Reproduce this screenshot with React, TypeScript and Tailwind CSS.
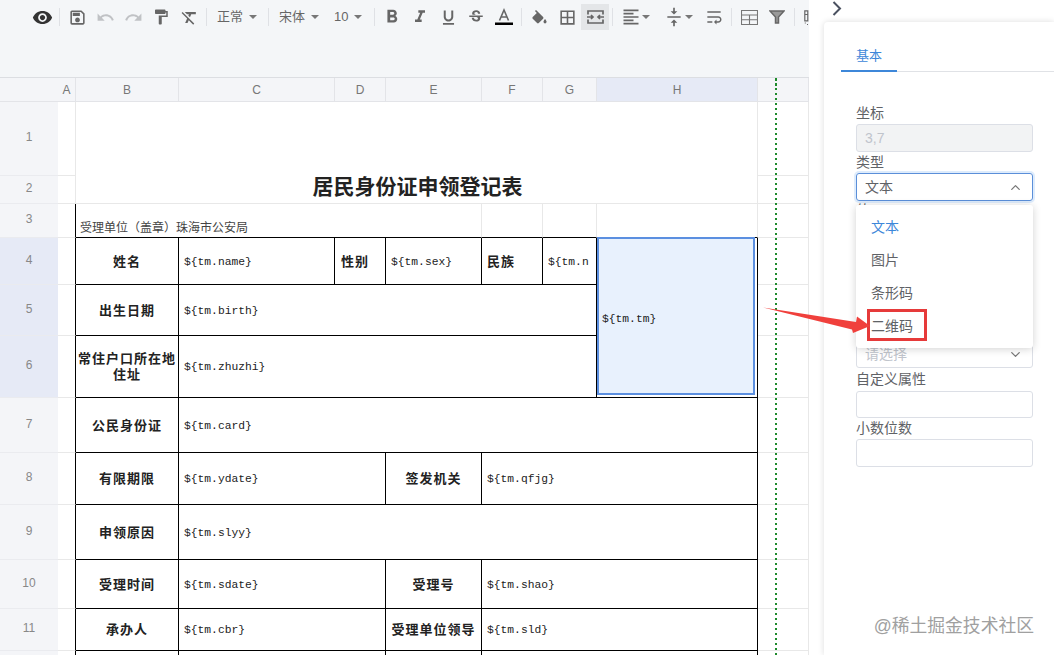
import React from "react";
import { ChevronUp, ChevronDown } from "lucide-react";
import {
  MdVisibility, MdOutlineSave, MdUndo, MdRedo, MdFormatPaint, MdFormatClear, MdFormatBold, MdFormatItalic,
  MdFormatUnderlined, MdStrikethroughS, MdBorderAll, MdFormatAlignLeft, MdVerticalAlignCenter, MdWrapText,
} from "react-icons/md";

const Sep = () => <div className="mx-[3px] h-[18px] w-px shrink-0 bg-[#dfe1e5]" />;
const Caret = () => <span className="h-0 w-0 border-x-[4px] border-t-[4px] border-x-transparent border-t-[#777]" />;
const Btn = ({ children, active }: { children: React.ReactNode; active?: boolean }) => (
  <div className={`flex h-[26px] w-[28px] shrink-0 items-center justify-center ${active ? "bg-[#e4e6e8]" : ""}`}>{children}</div>
);
const Sel = ({ label, w }: { label: string; w: string }) => (
  <div className={`flex h-[26px] shrink-0 items-center gap-[6px] pl-[7px] text-[13px] text-[#666] ${w}`}>
    <span>{label}</span>
    <Caret />
  </div>
);

const Merge = () => (
  <svg width="17" height="14" viewBox="0 0 17 14" fill="none" stroke="#666" strokeWidth="1.7">
    <path d="M1 4.5V1h15v3.5M1 9.500v3.500h15V9.500M0 7h6M4 5l2 2-2 2M17 7h-6M13 5l-2 2 2 2" />
  </svg>
);
const Bucket = () => (
  <svg width="19" height="19" viewBox="0 0 24 19" fill="#666">
    <path d="M16.56 8.94L7.62 0 6.21 1.410l2.380 2.380-5.150 5.150c-.59.59-.59 1.540 0 2.120l5.500 5.500c.29.29.68.44 1.060.44s.77-.15 1.060-.44l5.500-5.500c.59-.58.59-1.530 0-2.120zM19 11.500s-2 2.170-2 3.500c0 1.100.9 2 2 2s2-.9 2-2c0-1.330-2-3.500-2-3.500z" />
  </svg>
);
const ColorA = () => (
  <svg width="20" height="20" viewBox="0 0 20 20">
    <path d="M5.500 13.500 10 3l4.500 10.500M7 10h6" fill="none" stroke="#666" strokeWidth="1.600" />
    <rect x="1" y="15.500" width="18" height="2.500" fill="#000" />
  </svg>
);
const TableIcon = () => (
  <svg width="17" height="15" viewBox="0 0 17 15" fill="none" stroke="#777" strokeWidth="1.100">
    <path d="M.5.5h16v14H.5zM.5 5h16M.5 9.700h16M8.500 5v9.500" />
  </svg>
);
const Funnel = () => (
  <svg width="16" height="14" viewBox="0 0 16 14" fill="#999" stroke="#666" strokeWidth="1.500">
    <path d="M1 1h14L9.500 7v6h-3V7z" />
  </svg>
);
const Clipped = () => (
  <svg width="5" height="15" viewBox="0 0 5 15" fill="none" stroke="#666" strokeWidth="1.200">
    <path d="M.8.8h3v10h-3zM.8 4.500h3M.8 13h1M3 14.500h1" />
  </svg>
);

const Toolbar = () => (
  <div className="flex h-[78px] items-start overflow-hidden border-b border-[#dcdee2] bg-[#f4f6f8] pl-[28px] pt-[4px]">
    <div className="flex h-[26px] items-center">
      <Btn><MdVisibility size={21} color="#333" /></Btn>
      <Sep />
      <Btn><MdOutlineSave size={19} color="#666" /></Btn>
      <Btn><MdUndo size={19} color="#c0c2c5" /></Btn>
      <Btn><MdRedo size={19} color="#c0c2c5" /></Btn>
      <Btn><MdFormatPaint size={18} color="#666" /></Btn>
      <Btn><MdFormatClear size={19} color="#666" /></Btn>
      <Sep />
      <Sel label="正常" w="w-[55px]" />
      <Sep />
      <Sel label="宋体" w="w-[55px]" />
      <Sel label="10" w="w-[44px]" />
      <Sep />
      <Btn><MdFormatBold size={22} color="#666" /></Btn>
      <Btn><MdFormatItalic size={20} color="#666" /></Btn>
      <Btn><MdFormatUnderlined size={19} color="#666" /></Btn>
      <Btn><MdStrikethroughS size={18} color="#666" /></Btn>
      <Btn><ColorA /></Btn>
      <Sep />
      <Btn><Bucket /></Btn>
      <Btn><MdBorderAll size={19} color="#666" /></Btn>
      <Btn active><Merge /></Btn>
      <Sep />
      <div className="flex h-[26px] w-[43px] shrink-0 items-center gap-[1px] pl-[5px]"><MdFormatAlignLeft size={20} color="#666" /><Caret /></div>
      <div className="flex h-[26px] w-[41px] shrink-0 items-center gap-[1px] pl-[5px]"><MdVerticalAlignCenter size={20} color="#666" /><Caret /></div>
      <Btn><MdWrapText size={20} color="#666" /></Btn>
      <Sep />
      <Btn><TableIcon /></Btn>
      <Btn><Funnel /></Btn>
      <Sep />
      <div className="ml-[6px] shrink-0"><Clipped /></div>
    </div>
  </div>
);

const ColH = ({ t, sel }: { t: string; sel?: boolean }) => (
  <div className={`flex items-center justify-center border-r border-b border-[#e3e4e8] text-[12px] text-[#777] ${sel ? "bg-[#e6eaf6]" : "bg-[#f4f5f8]"}`}>{t}</div>
);
const RowH = ({ t, sel }: { t: string; sel?: boolean }) => (
  <div className={`flex items-center justify-center border-b border-[#eaebef] pb-[3px] text-[12px] text-[#888] ${sel ? "bg-[#e6eaf6]" : "bg-[#f4f5f8]"}`}>{t}</div>
);
const Light = ({ dark }: { dark?: boolean }) => (
  <div className={`border-b border-r border-b-[#e8e8e8] ${dark ? "border-r-black" : "border-r-[#e8e8e8]"}`} />
);
const Head = ({ t, span = "", left }: { t?: string; span?: string; left?: string }) => (
  <div className={`flex items-center border-r border-b border-black px-[2px] pt-[1px] text-center text-[13px] leading-[16px] font-bold tracking-[1px] text-[#222] ${left ?? "justify-center"} ${span}`}>
    <span>{t}</span>
  </div>
);
const Val = ({ t, span = "" }: { t?: string; span?: string }) => (
  <div className={`flex items-center overflow-hidden border-r border-b border-black pl-[5px] pt-[2px] font-['Liberation_Mono',monospace] text-[11.3px] whitespace-nowrap text-[#222] ${span}`}>{t}</div>
);
const RightCell = () => <div className="border-r border-b border-[#e8e8e8]" />;

const Sheet = () => (
  <div className="relative h-[577px] overflow-hidden bg-white">
    <div className="grid grid-cols-[58px_18px_103px_156px_51px_96px_61px_54px_161px_51px] grid-rows-[24px_74px_28px_34px_47px_51px_62px_55px_52px_55px_49px_42px_40px]">
      <div className="border-b border-[#e3e4e8] bg-[#f4f5f8]" />
      <ColH t="A" /><ColH t="B" /><ColH t="C" /><ColH t="D" /><ColH t="E" /><ColH t="F" /><ColH t="G" />
      <ColH t="H" sel /><ColH t="" />

      <RowH t="1" /><Light />
      <div className="col-span-7 row-span-2 flex items-end justify-center border-r border-b border-[#e8e8e8] pb-[1px] pl-[2px] text-[21px] leading-[30px] font-bold text-[#222]">
        居民身份证申领登记表
      </div>
      <RightCell />

      <RowH t="2" /><Light /><RightCell />

      <RowH t="3" /><Light dark />
      <div className="col-span-4 flex items-end border-b border-r border-b-black border-r-[#e8e8e8] pl-[4px] text-[12px] leading-[18px] text-[#444]">
        受理单位（盖章）珠海市公安局
      </div>
      <div className="border-b border-r border-b-black border-r-[#e8e8e8]" />
      <div className="border-b border-r border-b-black border-r-[#e8e8e8]" />
      <div className="border-b border-r border-b-black border-r-[#e8e8e8]" />
      <RightCell />

      <RowH t="4" sel /><Light dark />
      <Head t="姓名" /><Val t={"${tm.name}"} />
      <Head t="性别" left="justify-start pl-[6px]" /><Val t={"${tm.sex}"} />
      <Head t="民族" left="justify-start pl-[5px]" /><Val t={"${tm.n"} />
      <div className="row-span-3 border-r border-b border-black">
        <div className="-mt-px flex h-[158px] w-[158px] items-center border-2 border-[#5b8fe0] bg-[#e8f1fd] pl-[3px] pt-[6px] font-['Liberation_Mono',monospace] text-[11.3px] text-[#222]">
          {"${tm.tm}"}
        </div>
      </div>
      <RightCell />

      <RowH t="5" sel /><Light dark />
      <Head t="出生日期" /><Val t={"${tm.birth}"} span="col-span-5" />
      <RightCell />

      <RowH t="6" sel /><Light dark />
      <Head t="常住户口所在地住址" /><Val t={"${tm.zhuzhi}"} span="col-span-5" />
      <RightCell />

      <RowH t="7" /><Light dark />
      <Head t="公民身份证" /><Val t={"${tm.card}"} span="col-span-6" />
      <RightCell />

      <RowH t="8" /><Light dark />
      <Head t="有限期限" /><Val t={"${tm.ydate}"} span="col-span-2" />
      <Head t="签发机关" /><Val t={"${tm.qfjg}"} span="col-span-3" />
      <RightCell />

      <RowH t="9" /><Light dark />
      <Head t="申领原因" /><Val t={"${tm.slyy}"} span="col-span-6" />
      <RightCell />

      <RowH t="10" /><Light dark />
      <Head t="受理时间" /><Val t={"${tm.sdate}"} span="col-span-2" />
      <Head t="受理号" /><Val t={"${tm.shao}"} span="col-span-3" />
      <RightCell />

      <RowH t="11" /><Light dark />
      <Head t="承办人" /><Val t={"${tm.cbr}"} span="col-span-2" />
      <Head t="受理单位领导" /><Val t={"${tm.sld}"} span="col-span-3" />
      <RightCell />

      <RowH t="" /><Light dark />
      <Head /><Val span="col-span-2" /><Head /><Val span="col-span-3" />
      <RightCell />
    </div>
    <div className="absolute top-0 bottom-0 left-[775px] w-[2px] bg-[repeating-linear-gradient(to_bottom,#1d8a2b_0,#1d8a2b_2.5px,transparent_2.5px,transparent_5px)]" />
  </div>
);

const Label = ({ t, cls = "" }: { t: string; cls?: string }) => (
  <div className={`flex items-center pb-[2px] text-[14px] leading-[18px] text-[#606266] ${cls}`}>{t}</div>
);
const Input = ({ cls = "" }: { cls?: string }) => (
  <div className={`rounded-[3px] border border-[#dcdfe6] bg-white ${cls}`} />
);

const Panel = () => (
  <div className="relative flex h-[655px] w-[245px] shrink-0 flex-col bg-white pl-[15px]">
    <div className="flex h-[22px] shrink-0 items-start pl-[8px] pt-[1px]">
      <svg width="10" height="15" viewBox="0 0 10 15" fill="none" stroke="#4a5160" strokeWidth="2">
        <path d="M1.500 1l6.500 6.500-6.500 6.500" />
      </svg>
    </div>
    <div className="flex-1 rounded-tl-[4px] shadow-[0_0_6px_rgba(0,0,0,0.14)]">
      <div className="ml-[17px] h-[50px] border-b border-[#e0e2e6]">
        <div className="flex h-[50px] w-[56px] items-center justify-center border-b-2 border-[#3d87d9] pt-[20px] text-[13px] text-[#3d87d9]">基本</div>
      </div>
      <div className="relative ml-[32px] mt-[32px] w-[177px]">
        <Label t="坐标" cls="h-[20px]" />
        <div className="flex h-[28px] items-center rounded-[3px] border border-[#dcdfe6] bg-[#f2f3f4] pl-[8px] text-[14px] text-[#c0c4cc]">3,7</div>
        <Label t="类型" cls="h-[21px]" />
        <div className="flex h-[28px] items-center justify-between rounded-[3px] border border-[#5b8fd9] pl-[8px] pr-[9px] text-[14px] text-[#606266] shadow-[0_0_0_2px_rgba(90,160,240,0.2)]">
          <span>文本</span>
          <ChevronUp size={15} color="#777" />
        </div>
        <Label t="值" cls="h-[20px]" />
        <div className="mt-[120px] flex h-[27px] items-center justify-between rounded-[3px] border border-[#dcdfe6] pl-[8px] pr-[9px] text-[14px] text-[#c0c4cc]">
          <span>请选择</span>
          <ChevronDown size={15} color="#777" />
        </div>
        <Label t="自定义属性" cls="h-[23px]" />
        <Input cls="h-[27px]" />
        <Label t="小数位数" cls="h-[21px]" />
        <Input cls="h-[28px]" />

        <div className="absolute left-0 top-[101px] z-10 h-[143px] w-[177px] rounded-[3px] bg-white py-[6px] text-[14px] text-[#606266] shadow-[0_1px_8px_rgba(0,0,0,0.18)]">
          <div className="flex h-[33px] items-center pl-[15px] text-[#3d87d9]">文本</div>
          <div className="flex h-[33px] items-center pl-[15px]">图片</div>
          <div className="flex h-[33px] items-center pl-[15px]">条形码</div>
          <div className="relative flex h-[33px] items-center pl-[15px]">
            二维码
            <div className="absolute left-[11px] top-[-1px] h-[32px] w-[60px] border-[3px] border-[#e63a3a]" />
          </div>
        </div>
      </div>
    </div>
    <div className="absolute right-[20px] top-[614px] text-[17.8px] leading-[24px] text-[#a0a0a0]">@稀土掘金技术社区</div>
  </div>
);

export default function App() {
  return (
    <div className="relative flex h-[655px] w-[1054px] overflow-hidden bg-white font-['Liberation_Sans','Noto_Sans_CJK_SC',sans-serif]">
      <div className="w-[809px] shrink-0 overflow-hidden">
        <Toolbar />
        <Sheet />
      </div>
      <Panel />
      <svg className="absolute left-0 top-0 z-20 pointer-events-none" width="1054" height="655">
        <polygon points="763,307.5 856,322 857,316.5 870,326 853,333 852,329.5" fill="#f0403c" />
      </svg>
    </div>
  );
}
